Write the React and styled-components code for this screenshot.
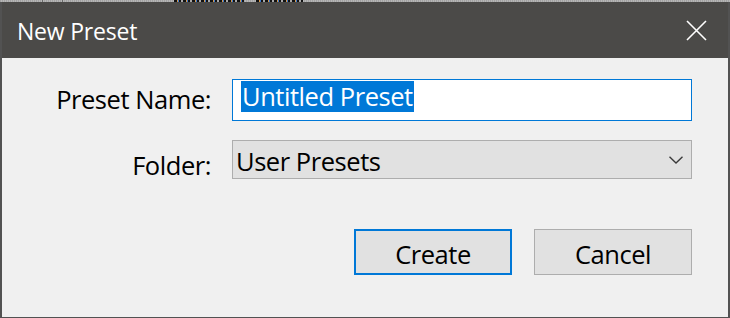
import React from 'react';
import styled, { createGlobalStyle } from 'styled-components';

const GlobalStyle = createGlobalStyle`
  html, body {
    margin: 0;
    padding: 0;
    background: #a8a8a8;
  }
  body {
    font-family: "Open Sans", "Noto Sans", sans-serif;
  }
`;

const CloseIcon = () => (
  <svg width="21" height="21" viewBox="0 0 21 21">
    <path d="M1 1 L20 20 M20 1 L1 20" stroke="#ffffff" strokeWidth="1.6" fill="none" />
  </svg>
);

const ChevronIcon = () => (
  <svg width="14" height="8" viewBox="0 0 14 8">
    <polyline points="0.5,0.8 7,7 13.5,0.8" stroke="#3a3a3a" strokeWidth="1.4" fill="none" />
  </svg>
);

const NewPresetDialog = () => {
  return (
    <Screen>
      <GlobalStyle />
      <BackdropStrip>
        <Tick $gap={42} />
        <Tick $gap={19} />
        <ClippedText $gap={111} $width={71} />
        <ClippedText $gap={11} $width={47} />
      </BackdropStrip>
      <Window>
        <TitleBar>
          <Title>New Preset</Title>
          <CloseButton aria-label="Close">
            <CloseIcon />
          </CloseButton>
        </TitleBar>
        <Body>
          <FieldLabel $top={3}>Preset Name:</FieldLabel>
          <NameBox>
            <Selection>Untitled Preset</Selection>
          </NameBox>
          <FieldLabel $top={8}>Folder:</FieldLabel>
          <FolderSelect>
            <SelectValue>User Presets</SelectValue>
            <ChevronIcon />
          </FolderSelect>
          <ButtonRow>
            <DialogButton $primary>Create</DialogButton>
            <DialogButton>Cancel</DialogButton>
          </ButtonRow>
        </Body>
      </Window>
    </Screen>
  );
};

const Screen = styled.div`
  width: 730px;
  height: 318px;
  display: flex;
  flex-direction: column;
  overflow: hidden;
`;

const BackdropStrip = styled.div`
  height: 2px;
  display: flex;
  background: repeating-linear-gradient(90deg, #a2a2a2 0 1px, #b6b6b6 1px 2px);
`;

const Tick = styled.div`
  width: 1px;
  margin-left: ${(p) => p.$gap}px;
  background: #6a6a6a;
`;

const ClippedText = styled.div`
  width: ${(p) => p.$width}px;
  margin-left: ${(p) => p.$gap}px;
  background: repeating-linear-gradient(90deg, #111 0 3px, #d89a4a 3px 4px, #3a7bd5 4px 5px, #111 5px 7px, #a8a8a8 7px 9px);
`;

const Window = styled.div`
  flex: 1;
  display: flex;
  flex-direction: column;
  border-left: 2px solid #525252;
  border-right: 2px solid #525252;
  border-bottom: 1px solid #525252;
`;

const TitleBar = styled.div`
  height: 56px;
  flex-shrink: 0;
  display: flex;
  align-items: center;
  justify-content: space-between;
  padding-left: 15px;
  background: #4b4a48;
`;

const Title = styled.div`
  color: #ffffff;
  font-size: 23px;
  letter-spacing: -0.2px;
  padding-top: 2px;
`;

const CloseButton = styled.button`
  width: 64px;
  height: 56px;
  display: flex;
  align-items: center;
  justify-content: center;
  padding: 0;
  border: none;
  background: transparent;
`;

const Body = styled.div`
  flex: 1;
  display: grid;
  grid-template-columns: 209px 460px;
  grid-template-rows: 42px 39px auto;
  column-gap: 21px;
  row-gap: 19px;
  align-content: start;
  padding-top: 21px;
  background: #f0f0f0;
  font-size: 25.5px;
  letter-spacing: -0.45px;
  color: #000000;
`;

const FieldLabel = styled.div`
  text-align: right;
  line-height: 34px;
  padding-top: ${(p) => p.$top}px;
`;

const NameBox = styled.div`
  display: flex;
  align-items: flex-start;
  box-sizing: border-box;
  padding: 1px 0 0 8px;
  border: 1px solid #0078d7;
  background: #ffffff;
`;

const Selection = styled.span`
  display: inline-block;
  line-height: 31px;
  padding: 0 1px;
  background: #0078d7;
  color: #ffffff;
`;

const FolderSelect = styled.div`
  display: flex;
  align-items: center;
  justify-content: space-between;
  box-sizing: border-box;
  padding: 0 8px 0 3px;
  border: 1px solid #adadad;
  background: #e1e1e1;
`;

const SelectValue = styled.span`
  line-height: 34px;
  padding-top: 3px;
`;

const ButtonRow = styled.div`
  grid-column: 2;
  display: flex;
  justify-content: flex-end;
  gap: 22px;
  margin-top: 31px;
`;

const DialogButton = styled.button`
  width: 158px;
  height: 46px;
  box-sizing: border-box;
  padding: 3px 0 0;
  font-family: inherit;
  font-size: 25.5px;
  letter-spacing: -0.45px;
  color: #000000;
  background: #e1e1e1;
  border: ${(p) => (p.$primary ? '2px solid #0078d7' : '1px solid #adadad')};
`;

export default NewPresetDialog;
